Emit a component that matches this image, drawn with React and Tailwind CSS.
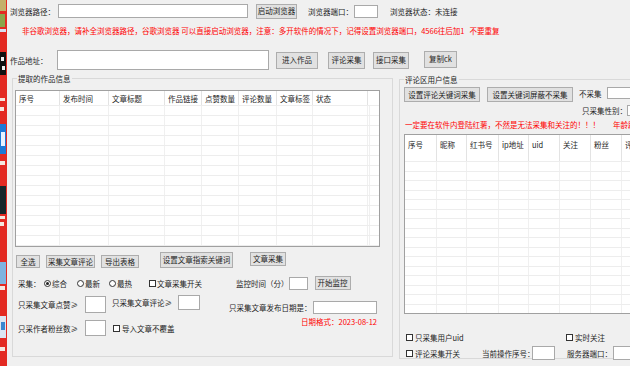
import React from "react";

const btn =
  "flex items-center justify-center bg-[#e1e1e1] border border-[#adadad] whitespace-nowrap shrink-0 leading-none";
const inp = "bg-white border border-[#a9a9a9] shrink-0";
const txt = "whitespace-nowrap shrink-0 leading-[11px]";

function Check() {
  return <span className="inline-block w-[7px] h-[7px] border border-[#333] bg-white shrink-0" />;
}
function Radio({ on }) {
  return (
    <span className="w-[7px] h-[7px] rounded-full border border-[#333] bg-white flex items-center justify-center shrink-0">
      {on ? <span className="w-[3px] h-[3px] rounded-full bg-[#222]" /> : null}
    </span>
  );
}

function Strip() {
  return (
    <svg width="7" height="366" viewBox="0 0 7 366" className="shrink-0 block">
      <rect width="7" height="366" fill="#e32a22" />
      <rect x="0" y="0" width="6" height="11" fill="#c4b06a" />
      <rect x="0" y="14" width="5" height="13" fill="#8aa64a" />
      <rect x="0" y="29" width="6" height="3" fill="#d8e0f0" />
      <rect x="0" y="52" width="6" height="23" fill="#111" />
      <rect x="1" y="57" width="3" height="4" fill="#eee" />
      <rect x="2" y="66" width="3" height="4" fill="#eee" />
      <rect x="0" y="98" width="5" height="3" fill="#f4e8e0" />
      <rect x="0" y="107" width="4" height="4" fill="#f4e8e0" />
      <rect x="0" y="124" width="6" height="30" fill="#1d79d6" />
      <rect x="1" y="132" width="4" height="14" fill="#e8f2ff" />
      <rect x="0" y="161" width="5" height="4" fill="#f4e8e0" />
      <rect x="0" y="186" width="6" height="28" fill="#16262a" />
      <rect x="0" y="216" width="5" height="3" fill="#f4e8e0" />
      <rect x="0" y="222" width="4" height="4" fill="#f4e8e0" />
      <rect x="0" y="262" width="6" height="22" fill="#7fb4e0" />
      <rect x="0" y="286" width="5" height="4" fill="#f4e8e0" />
      <rect x="0" y="316" width="6" height="22" fill="#dce6f2" />
      <rect x="1" y="322" width="4" height="8" fill="#3a86d0" />
      <rect x="0" y="347" width="5" height="4" fill="#f4e8e0" />
    </svg>
  );
}

const leftCols = [
  ["序号", "w-[44px]"],
  ["发布时间", "w-[49px]"],
  ["文章标题", "w-[56px]"],
  ["作品链接", "w-[37px]"],
  ["点赞数量", "w-[37px]"],
  ["评论数量", "w-[38px]"],
  ["文章标签", "w-[36px]"],
  ["状态", "w-[55px]"],
];

const rightCols = [
  ["序号", "w-[32px]"],
  ["昵称", "w-[30px]"],
  ["红书号", "w-[32px]"],
  ["ip地址", "w-[30px]"],
  ["uid", "w-[31px]"],
  ["关注", "w-[31px]"],
  ["粉丝", "w-[31px]"],
  ["评论", "w-[40px]"],
];

const rows = Array.from({ length: 16 }, (_, i) => i);

function LeftTable() {
  return (
    <div className="ml-[2px] mt-[11px] w-[365px] h-[157px] bg-white border border-[#a0a0a0] overflow-hidden flex flex-col shrink-0">
      <div className="flex h-[14px] shrink-0">
        {leftCols.map(([t, w]) => (
          <div key={t} className={`${w} shrink-0 border-r border-[#e3e3e3] pl-[3px] pt-[2px] ${txt} overflow-hidden`}>
            {t}
          </div>
        ))}
        <div className="flex-1" />
      </div>
      {rows.map((r) => (
        <div key={r} className="flex h-[10px] shrink-0 border-t border-[#ededed]">
          {leftCols.map(([t, w]) => (
            <div key={t} className={`${w} shrink-0 border-r border-[#f0f0f0]`} />
          ))}
          <div className="w-[2px] border-r border-[#f0f0f0]" />
        </div>
      ))}
    </div>
  );
}

function RightTable() {
  return (
    <div className="ml-[4px] mt-[4px] w-[240px] h-[180px] bg-white border border-[#a0a0a0] border-r-0 overflow-hidden flex flex-col shrink-0">
      <div className="flex h-[26px] shrink-0">
        {rightCols.map(([t, w]) => (
          <div key={t} className={`${w} shrink-0 border-r border-[#e3e3e3] pl-[3px] pt-[4px] ${txt} overflow-hidden`}>
            {t}
          </div>
        ))}
      </div>
      {rows.map((r) => (
        <div key={r} className="flex h-[9.5px] shrink-0 border-t border-[#ededed]">
          {rightCols.map(([t, w]) => (
            <div key={t} className={`${w} shrink-0 border-r border-[#f0f0f0]`} />
          ))}
        </div>
      ))}
    </div>
  );
}

export default function App() {
  return (
    <div className="w-[630px] h-[366px] overflow-hidden flex bg-[#f0f0f0] text-[#1e1e1e] text-[7.5px] font-['Noto_Sans_CJK_SC',sans-serif]">
      <Strip />
      <div className="flex-1 flex flex-col min-w-0">
        {/* row 1 */}
        <div className="flex items-center h-[16px] mt-[3px]">
          <span className={`${txt} ml-[3px] w-[48px]`}>浏览器路径：</span>
          <div className={`${inp} w-[190px] h-[14px]`} />
          <div className={`${btn} ml-[8px] w-[41px] h-[15px]`}>启动浏览器</div>
          <span className={`${txt} ml-[11px] w-[46px]`}>浏览器端口：</span>
          <div className={`${inp} w-[24px] h-[13px]`} />
          <span className={`${txt} ml-[12px]`}>浏览器状态：未连接</span>
        </div>
        {/* row 2 */}
        <div className={`${txt} mt-[6px] ml-[15px] text-[#ff0000]`}>
          非谷歌浏览器，请补全浏览器路径，谷歌浏览器 可以直接启动浏览器，注意：多开软件的情况下，记得设置浏览器端口，4566往后加1&nbsp;&nbsp;&nbsp;不要重复
        </div>
        {/* row 3 */}
        <div className="flex items-center h-[20px] mt-[14px]">
          <span className={`${txt} ml-[3px] w-[47px]`}>作品地址：</span>
          <div className={`${inp} w-[212px] h-[20px]`} />
          <div className={`${btn} ml-[7px] w-[42px] h-[17px]`}>进入作品</div>
          <div className={`${btn} ml-[10px] w-[37px] h-[17px]`}>评论采集</div>
          <div className={`${btn} ml-[8px] w-[36px] h-[17px]`}>接口采集</div>
          <div className={`${btn} ml-[15px] w-[33px] h-[17px] -mt-[2px]`}>复制ck</div>
        </div>

        {/* group boxes */}
        <div className="flex items-start">
          {/* left group */}
          <div className="relative ml-[5px] mt-[8px] w-[381px] h-[279px] border border-[#d9d9d9] flex flex-col shrink-0">
            <span className={`${txt} absolute -top-[6px] left-[4px] px-[1px] bg-[#f0f0f0]`}>提取的作品信息</span>
            <LeftTable />
            {/* buttons row */}
            <div className="flex items-start h-[16px] mt-[5px]">
              <div className={`${btn} ml-[3px] mt-[3px] w-[24px] h-[13px]`}>全选</div>
              <div className={`${btn} ml-[6px] mt-[3px] w-[49px] h-[13px]`}>采集文章评论</div>
              <div className={`${btn} ml-[6px] mt-[3px] w-[38px] h-[13px]`}>导出表格</div>
              <div className={`${btn} ml-[21px] w-[73px] h-[16px]`}>设置文章指索关键词</div>
              <div className={`${btn} ml-[17px] w-[36px] h-[14px]`}>文章采集</div>
            </div>
            {/* radio row */}
            <div className="flex items-center h-[14px] mt-[8px]">
              <span className={`${txt} ml-[5px] w-[26px]`}>采集：</span>
              <Radio on />
              <span className={`${txt} ml-[1px]`}>综合</span>
              <span className="ml-[10px]"><Radio /></span>
              <span className={`${txt} ml-[1px]`}>最新</span>
              <span className="ml-[9px]"><Radio /></span>
              <span className={`${txt} ml-[1px]`}>最热</span>
              <span className="ml-[17px] flex"><Check /></span>
              <span className={`${txt} ml-[1px]`}>文章采集开关</span>
              <span className={`${txt} ml-[34px]`}>监控时间（分）</span>
              <div className={`${inp} w-[19px] h-[13px]`} />
              <div className={`${btn} ml-[7px] w-[36px] h-[14px]`}>开始监控</div>
            </div>
            {/* filters */}
            <div className="flex items-start mt-[5px]">
              <div className="flex flex-col ml-[5px] gap-[7px]">
                <div className="flex items-center h-[17px] mt-[1px]">
                  <span className={`${txt} w-[67px]`}>只采集文章点赞≥</span>
                  <div className={`${inp} w-[21px] h-[17px]`} />
                </div>
                <div className="flex items-center h-[16px]">
                  <span className={`${txt} w-[67px]`}>只采作者粉丝数≥</span>
                  <div className={`${inp} w-[21px] h-[16px]`} />
                </div>
              </div>
              <div className="flex flex-col ml-[6px]">
                <div className="flex items-center h-[15px]">
                  <span className={`${txt} w-[66px]`}>只采集文章评论≥</span>
                  <div className={`${inp} w-[22px] h-[15px]`} />
                </div>
                <div className="flex items-center h-[10px] mt-[13px] ml-[1px]">
                  <Check />
                  <span className={`${txt} ml-[2px]`}>导入文章不覆盖</span>
                </div>
              </div>
              <div className="flex flex-col items-end ml-[29px] mt-[6px]">
                <div className="flex items-center h-[13px]">
                  <span className={`${txt} w-[84px]`}>只采集文章发布日期是：</span>
                  <div className={`${inp} w-[64px] h-[13px]`} />
                </div>
                <span className={`${txt} mt-[2px] text-[#ff0000]`}>日期格式：2023-08-12</span>
              </div>
            </div>
          </div>

          {/* right group */}
          <div className="relative ml-[6px] mt-[9px] w-[240px] h-[280px] border border-[#d9d9d9] border-r-0 flex flex-col shrink-0">
            <span className={`${txt} absolute -top-[6px] left-[4px] px-[1px] bg-[#f0f0f0]`}>评论区用户信息</span>
            <div className="flex items-start mt-[7px]">
              <div className={`${btn} ml-[4px] w-[76px] h-[15px]`}>设置评论关键词采集</div>
              <div className={`${btn} ml-[7px] w-[86px] h-[15px]`}>设置关键词屏蔽不采集</div>
              <span className={`${txt} ml-[6px] mt-[1px] w-[28px]`}>不采集</span>
              <div className={`${inp} w-[30px] h-[12px]`} />
            </div>
            <div className="flex items-center h-[11px] mt-[3px]">
              <span className={`${txt} ml-[182px] w-[45px]`}>只采集性别：</span>
              <div className={`${inp} w-[20px] h-[11px]`} />
            </div>
            <div className="flex items-center h-[11px] mt-[3px] text-[#ff0000]">
              <span className={`${txt} ml-[5px]`}>一定要在软件内登陆红薯，不然是无法采集和关注的！！！</span>
              <span className={`${txt} ml-[13px]`}>年龄段</span>
            </div>
            <RightTable />
            <div className="flex items-center h-[10px] mt-[18px]">
              <span className="ml-[6px] flex"><Check /></span>
              <span className={`${txt} ml-[2px] w-[151px]`}>只采集用户uid</span>
              <Check />
              <span className={`${txt} ml-[2px]`}>实时关注</span>
            </div>
            <div className="flex items-center h-[14px] mt-[4px]">
              <span className="ml-[6px] flex"><Check /></span>
              <span className={`${txt} ml-[2px] w-[67px]`}>评论采集开关</span>
              <span className={`${txt} w-[50px]`}>当前操作序号：</span>
              <div className={`${inp} w-[23px] h-[14px]`} />
              <span className={`${txt} ml-[12px] w-[46px]`}>服务器端口：</span>
              <div className={`${inp} w-[30px] h-[14px]`} />
            </div>
          </div>
        </div>
      </div>
    </div>
  );
}
